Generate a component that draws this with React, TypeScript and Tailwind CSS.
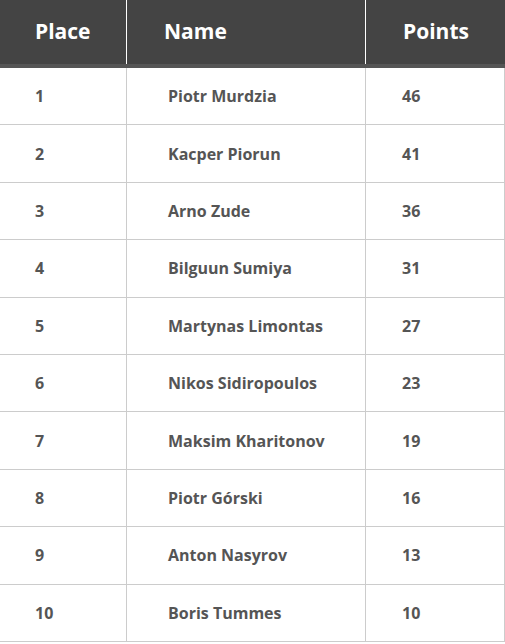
const rows = [
  { place: 1, name: "Piotr Murdzia", points: 46 },
  { place: 2, name: "Kacper Piorun", points: 41 },
  { place: 3, name: "Arno Zude", points: 36 },
  { place: 4, name: "Bilguun Sumiya", points: 31 },
  { place: 5, name: "Martynas Limontas", points: 27 },
  { place: 6, name: "Nikos Sidiropoulos", points: 23 },
  { place: 7, name: "Maksim Kharitonov", points: 19 },
  { place: 8, name: "Piotr Górski", points: 16 },
  { place: 9, name: "Anton Nasyrov", points: 13 },
  { place: 10, name: "Boris Tummes", points: 10 },
];

export default function App() {
  return (
    <div className="w-[505px] bg-white" style={{ fontFamily: '"Open Sans", sans-serif' }}>
      {/* header */}
      <div className="flex h-[68px] bg-[#444444] border-b-[4px] border-[#555555] text-white font-bold text-[21px]">
        <div className="w-[127px] border-r border-white flex items-center pl-[35px]">Place</div>
        <div className="w-[239px] border-r border-white flex items-center pl-[37px]">Name</div>
        <div className="flex-1 flex items-center pl-[37px]">Points</div>
      </div>

      {rows.map((r) => (
        <div
          key={r.place}
          className="flex h-[57.4px] border-b border-r border-[#cccccc] text-[#555555] font-bold text-[16px]"
        >
          <div className="w-[127px] border-r border-[#cccccc] flex items-center pl-[35px]">{r.place}</div>
          <div className="w-[239px] border-r border-[#cccccc] flex items-center pl-[41px]">{r.name}</div>
          <div className="flex-1 flex items-center pl-[36px]">{r.points}</div>
        </div>
      ))}
    </div>
  );
}
